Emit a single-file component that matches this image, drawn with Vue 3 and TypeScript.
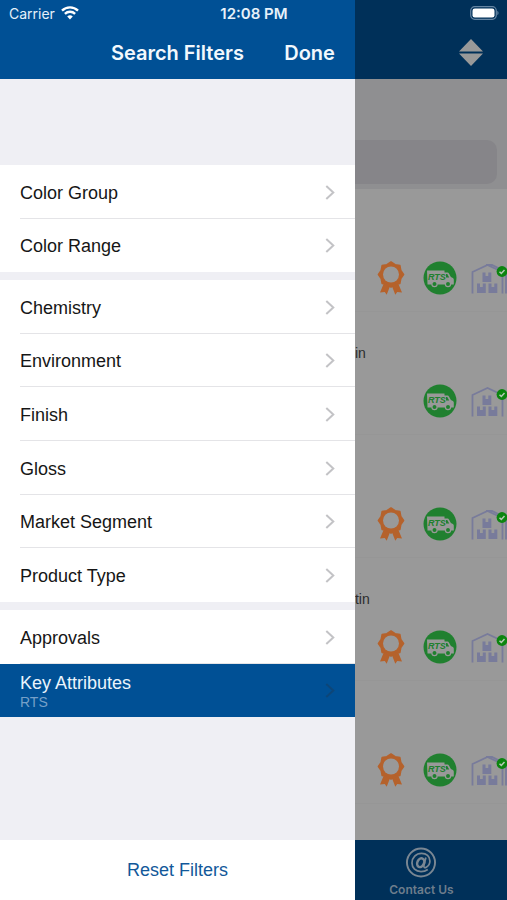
<script setup lang="ts">
import { ref } from 'vue'

interface Filter {
  name: string
  value?: string
}

interface Product {
  finish: string
  certified: boolean
  annex: boolean
}

const groups: Filter[][] = [
  [{ name: 'Color Group' }, { name: 'Color Range' }],
  [
    { name: 'Chemistry' },
    { name: 'Environment' },
    { name: 'Finish' },
    { name: 'Gloss' },
    { name: 'Market Segment' },
    { name: 'Product Type' },
  ],
  [{ name: 'Approvals' }, { name: 'Key Attributes', value: 'RTS' }],
]

const products: Product[] = [
  { finish: '', certified: true, annex: true },
  { finish: 'in', certified: false, annex: false },
  { finish: '', certified: true, annex: true },
  { finish: 'tin', certified: true, annex: false },
  { finish: '', certified: true, annex: true },
]

const selected = ref('Key Attributes')
const query = ref('')

// Eight-pointed rosette outline around the ribbon's ring
const rosette = Array.from({ length: 16 }, (_, i) => {
  const r = i % 2 === 0 ? 12.6 : 10.6
  const a = (Math.PI * i) / 8 - Math.PI / 2
  return `${(18 + r * Math.cos(a)).toFixed(1)},${(14.5 + r * Math.sin(a)).toFixed(1)}`
}).join(' ')
</script>

<template>
  <div class="screen">
    <aside class="drawer">
      <header class="drawer-bar">
        <h1>Search Filters</h1>
        <button type="button" class="done">Done</button>
      </header>
      <nav class="filters" aria-label="Filters">
        <ul v-for="(group, g) in groups" :key="g" class="group" :class="{ tall: group.length > 2 }">
          <li v-for="item in group" :key="item.name">
            <button
              type="button"
              class="row"
              :class="{ active: selected === item.name }"
              @click="selected = item.name"
            >
              <span class="label">
                <span>{{ item.name }}</span>
                <span v-if="item.value" class="value">{{ item.value }}</span>
              </span>
              <svg class="chevron" width="10" height="16" viewBox="0 0 10 16" aria-hidden="true">
                <path d="M1.300 1 8.300 7.500l-7 6.500" />
              </svg>
            </button>
          </li>
        </ul>
      </nav>
      <footer class="drawer-foot">
        <button type="button" class="reset">Reset Filters</button>
      </footer>
    </aside>

    <main class="page">
      <header class="page-bar">
        <button type="button" class="sort" aria-label="Sort">
          <svg width="24" height="28" viewBox="0 0 24 28" aria-hidden="true">
            <path d="M12 0 24 12.500H0zM0 14.500h24L12 27z" />
          </svg>
        </button>
      </header>
      <div class="search">
        <input v-model="query" type="search" aria-label="Search products" />
      </div>
      <ul class="products">
        <li v-for="(p, i) in products" :key="i" class="product">
          <p class="finish">{{ p.finish }}</p>
          <div class="badges">
            <svg v-if="p.certified" class="ribbon" width="36" height="36" viewBox="0 0 36 36" aria-hidden="true">
              <path d="M11 23 7 32.500l4.800-.6 1.900 2.800L17.500 25zM25 23l4 9.500-4.800-.6-1.900 2.800L18.500 25z" />
              <polygon :points="rosette" />
              <circle class="hole" cx="18" cy="14.500" r="8" />
            </svg>
            <svg class="van" width="36" height="36" viewBox="0 0 36 36" aria-hidden="true">
              <circle class="disc" cx="18" cy="18" r="16.500" />
              <path class="body" d="M5 10.500h17.500v2h2.600c1 0 1.600.4 2 1.200l1.800 3.300 2 1.100c.6.4.9.8.9 1.500v4.900H5.500z" />
              <path class="glass" d="M24 14h1.300l1.900 3.500H24z" />
              <circle class="wheel" cx="12.500" cy="24" r="2.600" />
              <circle class="wheel" cx="26" cy="24" r="2.600" />
              <text x="6" y="19.500">RTS</text>
            </svg>
            <svg class="depot" width="36" height="36" viewBox="0 0 36 36" aria-hidden="true">
              <path class="frame" d="M1.500 33.500V12L16.500 5l15 7v21.500" />
              <path v-if="p.annex" class="frame" d="M15 5h6l14 7v21.500" />
              <path
                class="crate"
                d="M11.500 12.500h3v3.500h2.800v-3.500h3v9.500h-8.800zM6 23.500h3V27h2.800v-3.500h3V33H6zM17.500 23.500h3V27h2.800v-3.500h3V33h-8.800z"
              />
              <circle class="tick-disc" cx="31" cy="11.500" r="5.400" />
              <path class="tick" d="m28.500 11.700 1.800 1.700 3.200-3.500" />
            </svg>
          </div>
        </li>
      </ul>
      <footer class="tabs">
        <a href="#contact" class="tab">
          <svg width="32" height="32" viewBox="0 0 32 32" aria-hidden="true">
            <circle cx="16" cy="16" r="14.500" />
            <path
              class="at"
              d="M21 10.800 19 19c-.5 2.300 1 2.800 2.500 1.900 2.300-1.400 3.700-3.700 3.700-6.400 0-4.800-3.600-7.900-8.600-7.900-5.700 0-9.900 4.300-9.900 9.800 0 5.400 3.800 9 9.300 9 2.800 0 5-.7 7-2.100"
            />
            <ellipse class="bowl" cx="15.700" cy="16.200" rx="3.400" ry="4.700" transform="rotate(24 15.700 16.200)" />
          </svg>
          <span>Contact Us</span>
        </a>
      </footer>
    </main>

    <div class="status">
      <span class="carrier">
        Carrier
        <svg width="18" height="14" viewBox="0 0 18 14" aria-hidden="true">
          <path class="wave" d="M1 4.600a11.500 11.500 0 0 1 16 0M3.900 7.900a7.300 7.300 0 0 1 10.200 0" />
          <path class="dot" d="M9 13.500 6.200 10.500a4 4 0 0 1 5.600 0z" />
        </svg>
      </span>
      <time>12:08 PM</time>
      <svg class="battery" width="29" height="14" viewBox="0 0 29 14" aria-hidden="true">
        <rect class="case" x=".7" y=".7" width="25.600" height="12.600" rx="4" />
        <rect class="charge" x="2.500" y="2.500" width="22" height="9" rx="2.300" />
        <path class="cap" d="M27.300 4.800c1.700.8 1.700 3.600 0 4.400z" />
      </svg>
    </div>
  </div>
</template>

<style>
body {
  margin: 0;
}
</style>

<style scoped>
.screen {
  display: grid;
  grid-template-columns: 7fr 3fr;
  grid-template-rows: 26px 1fr;
  min-height: 100vh;
  font-family: 'Liberation Sans', Arial, sans-serif;
}

button {
  border: 0;
  padding: 0;
  background: none;
  font: inherit;
  color: inherit;
  cursor: pointer;
}

ul {
  list-style: none;
  margin: 0;
  padding: 0;
}

.status {
  grid-area: 1 / 1 / 2 / 3;
  display: grid;
  grid-template-columns: 1fr auto 1fr;
  align-items: center;
  padding: 0 8px 0 9px;
  color: #e6f1fa;
  font-family: Inter, sans-serif;
  font-size: 14px;
}

.carrier {
  display: flex;
  align-items: center;
  gap: 6px;
}

.wave {
  fill: none;
  stroke: #fff;
  stroke-width: 2.4;
}

.dot,
.charge {
  fill: #fff;
}

time {
  font-size: 15px;
  font-weight: 600;
}

.battery {
  justify-self: end;
}

.case {
  fill: none;
  stroke: #6585a3;
  stroke-width: 1.2;
}

.cap {
  fill: #6585a3;
}

.drawer {
  grid-area: 1 / 1 / 3 / 2;
  display: flex;
  flex-direction: column;
  min-width: 0;
  background: #efeff4;
}

.drawer-bar {
  display: grid;
  grid-template-columns: 1fr auto 1fr;
  align-items: center;
  height: 53px;
  padding: 26px 20px 0;
  background: #005095;
  color: #f2f8fd;
  font-family: Inter, sans-serif;
  font-size: 20px;
  font-weight: 600;
}

.drawer-bar h1 {
  grid-column: 2;
  margin: 0;
  font: inherit;
}

.done {
  justify-self: end;
}

.filters {
  flex: 1;
  display: flex;
  flex-direction: column;
  gap: 8px;
  padding-top: 86px;
}

.group {
  display: grid;
  grid-auto-rows: 1fr;
  min-height: 107px;
  background: #fff;
}

.group.tall {
  min-height: 322px;
}

.group li {
  display: flex;
}

.row {
  flex: 1;
  display: flex;
  align-items: center;
  gap: 8px;
  padding: 2px 20px 0;
  text-align: left;
  color: #161616;
  font-size: 18px;
  line-height: 22px;
  background: linear-gradient(#e4e4e7, #e4e4e7) 20px 100% / 100% 1px no-repeat;
}

.group li:last-child .row {
  background: none;
}

.group li .row.active {
  background: #005095;
  color: #eaf4fc;
}

.label {
  flex: 1;
  display: flex;
  flex-direction: column;
}

.value {
  color: #76a0c8;
  font-size: 14px;
  line-height: 16px;
}

.chevron {
  fill: none;
  stroke: #c3c3c6;
  stroke-width: 2;
}

.active .chevron {
  stroke: #0d4678;
}

.drawer-foot {
  display: flex;
  justify-content: center;
  height: 60px;
  background: #fff;
}

.reset {
  color: #12589a;
  font-size: 18px;
}

.page {
  grid-area: 1 / 2 / 3 / 3;
  display: flex;
  flex-direction: column;
  min-width: 0;
  overflow: hidden;
  background: #999;
}

.page-bar {
  display: flex;
  justify-content: flex-end;
  align-items: center;
  height: 53px;
  padding: 26px 24px 0;
  background: #003059;
}

.sort {
  display: flex;
}

.sort path {
  fill: #999;
}

.search {
  display: flex;
  padding: 61px 10px 5px 0;
  background: #8f8f91;
}

.search input {
  flex: 1;
  min-width: 0;
  height: 44px;
  box-sizing: border-box;
  padding: 0 12px;
  border: 0;
  border-radius: 0 10px 10px 0;
  background: #868589;
  font: inherit;
  appearance: none;
}

.products {
  flex: 1;
}

.product {
  display: flex;
  flex-direction: column;
  justify-content: space-between;
  box-sizing: border-box;
  height: 123px;
  padding: 31px 0 15px;
  border-bottom: 1px solid #969696;
}

.finish {
  margin: 0;
  color: #2c2c2c;
  font-size: 14px;
  line-height: 20px;
}

.badges {
  display: flex;
  justify-content: flex-end;
  gap: 13px;
}

.ribbon {
  fill: #b5622c;
}

.ribbon polygon {
  stroke: #b5622c;
  stroke-width: 1.5;
  stroke-linejoin: round;
}

.hole {
  fill: #999;
}

.disc,
.wheel,
.glass {
  fill: #20802f;
}

.body {
  fill: #999;
}

.wheel {
  stroke: #999;
  stroke-width: 1.2;
}

.van text {
  fill: #20802f;
  font-family: 'Liberation Sans Narrow', 'Liberation Sans', sans-serif;
  font-size: 9px;
  font-style: italic;
  font-weight: 700;
}

.frame {
  fill: none;
  stroke: #787b9b;
  stroke-width: 1.8;
}

.crate {
  fill: #787b9b;
}

.tick-disc {
  fill: #0c850f;
}

.tick {
  fill: none;
  stroke: #b5c9b5;
  stroke-width: 1.5;
}

.tabs {
  display: flex;
  height: 60px;
  padding-right: 19px;
  background: #003059;
}

.tab {
  flex: 1;
  display: flex;
  flex-direction: column;
  align-items: center;
  gap: 2px;
  padding-top: 7px;
  color: #6d7d8c;
  font-family: Inter, sans-serif;
  font-size: 12px;
  font-weight: 600;
  line-height: 20px;
  text-decoration: none;
}

.tab svg {
  fill: none;
  stroke: #7a8793;
  stroke-width: 2;
}

.tab .at {
  stroke-width: 1.8;
}

.tab .bowl {
  stroke-width: 2.6;
}
</style>
